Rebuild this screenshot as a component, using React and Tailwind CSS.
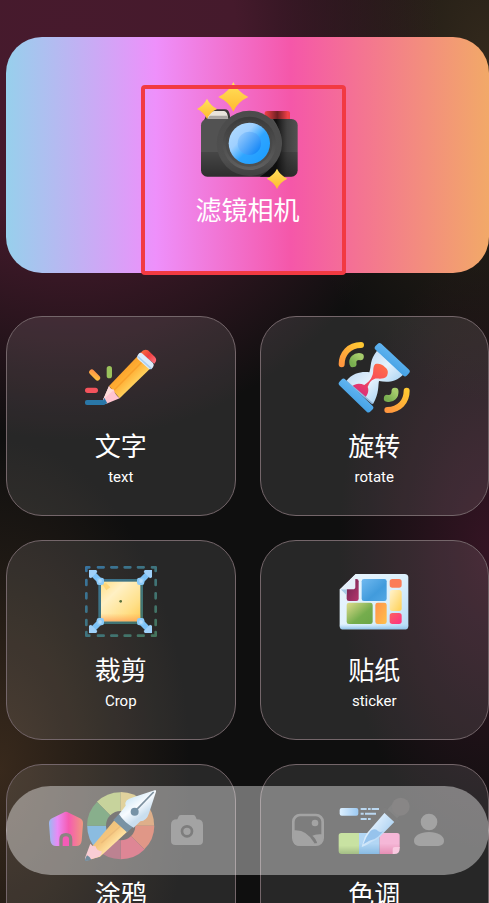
import { useState } from 'react';
import clsx from 'clsx';

const PencilIcon = () => (
  <svg viewBox="45 18 216 216" className="size-18" aria-hidden="true">
    <defs>
      <linearGradient id="pencil-body" x1="130" y1="90" x2="190" y2="150" gradientUnits="userSpaceOnUse">
        <stop offset="0" stopColor="#ffb65a" />
        <stop offset="0.35" stopColor="#fba22c" />
        <stop offset="0.6" stopColor="#ffae33" />
        <stop offset="1" stopColor="#ffd05c" />
      </linearGradient>
      <linearGradient id="pencil-eraser" x1="215" y1="50" x2="255" y2="85" gradientUnits="userSpaceOnUse">
        <stop offset="0" stopColor="#f8693c" />
        <stop offset="0.45" stopColor="#ef3f3f" />
        <stop offset="1" stopColor="#ff7280" />
      </linearGradient>
      <linearGradient id="pencil-spark" x1="0" y1="0" x2="1" y2="1">
        <stop offset="0" stopColor="#ff8a4a" />
        <stop offset="1" stopColor="#ffc93c" />
      </linearGradient>
      <linearGradient id="pencil-blue" x1="0" y1="0" x2="1" y2="0">
        <stop offset="0" stopColor="#2a77a8" />
        <stop offset="1" stopColor="#2a77a8" />
      </linearGradient>
    </defs>
    <rect x="45" y="195" width="62" height="15" rx="6" fill="url(#pencil-blue)" />
    <rect x="45" y="158" width="39" height="16" rx="8" fill="#f4535c" />
    <rect x="110" y="93" width="16" height="37" rx="8" fill="#9bc25c" />
    <rect x="54" y="112" width="40" height="16" rx="8" fill="url(#pencil-spark)" transform="rotate(45 74 120)" />
    <path d="M117 153 L201 65 L240 101 L149 190 Z" fill="url(#pencil-body)" />
    <path d="M132 166 L219 78" stroke="#f48f20" strokeWidth="4" opacity="0.5" />
    <path d="M117 153 Q121 164 132 164 Q133 176 149 190 L109 206 Q98 204 99 194 Z" fill="#ffc4cf" />
    <path d="M117 153 Q121 164 132 164 L99 194 Z" fill="#ffdcd9" />
    <path d="M103 188 Q99 196 96 204 Q103 210 112 205 Z" fill="#2a77a8" />
    <path d="M211 54 Q222 40 234 46 L255 66 Q263 76 253 86 Z" fill="url(#pencil-eraser)" />
    <path d="M205 58 Q210 51 216 55 L249 84 Q254 90 249 97 Q244 105 237 102 L204 73 Q198 67 205 58Z" fill="#dcebfa" />
    <path d="M205 66 L243 100" stroke="#a9cff0" strokeWidth="5" strokeLinecap="round" />
  </svg>
);

const HourglassIcon = () => (
  <svg viewBox="40 33 216 216" className="size-18" fill="none" aria-hidden="true">
    <defs>
      <linearGradient id="arc-orange" x1="0" y1="1" x2="1" y2="0">
        <stop offset="0" stopColor="#ff963f" />
        <stop offset="1" stopColor="#ffc832" />
      </linearGradient>
      <linearGradient id="arc-green" x1="0" y1="1" x2="1" y2="0">
        <stop offset="0" stopColor="#79ae50" />
        <stop offset="1" stopColor="#a6cc6c" />
      </linearGradient>
      <linearGradient id="glass-top" x1="150" y1="75" x2="218" y2="145" gradientUnits="userSpaceOnUse">
        <stop offset="0" stopColor="#cbe2f7" />
        <stop offset="0.5" stopColor="#e5f2fd" />
        <stop offset="1" stopColor="#b8dbf5" />
      </linearGradient>
      <linearGradient id="glass-bar" x1="0" y1="0" x2="1" y2="1">
        <stop offset="0" stopColor="#62b5f1" />
        <stop offset="1" stopColor="#44a1e4" />
      </linearGradient>
      <linearGradient id="sand" x1="185" y1="105" x2="115" y2="200" gradientUnits="userSpaceOnUse">
        <stop offset="0" stopColor="#ff7048" />
        <stop offset="0.5" stopColor="#f84d58" />
        <stop offset="1" stopColor="#d92d7a" />
      </linearGradient>
    </defs>
    <path d="M51 103 C51 72 73 45 109 45" stroke="url(#arc-orange)" strokeWidth="18" strokeLinecap="round" />
    <path d="M85 101 C82 88 92 78 107 80" stroke="url(#arc-green)" strokeWidth="21" strokeLinecap="round" />
    <path d="M188 240 C224 240 246 214 246 182" stroke="url(#arc-orange)" strokeWidth="18" strokeLinecap="round" />
    <path d="M188 205 C203 208 212 197 211 184" stroke="url(#arc-green)" strokeWidth="21" strokeLinecap="round" />
    <path d="M157 62 L238 132 C212 158 187 158 163 153 C160 165 164 191 145 222 L65 153 C86 126 116 124 134 127 C141 106 134 91 157 62Z" fill="url(#glass-top)" />
    <path d="M152 102 C163 99 174 103 181 112 C190 118 192 127 187 138 C176 151 157 143 149 147 C138 151 133 160 129 171 C135 184 126 197 123 202 L82 169 C92 160 106 159 119 165 C130 158 139 149 142 139 C149 126 142 112 152 102Z" fill="url(#sand)" />
    <path d="M65 154 L144 221" stroke="#8fb7dc" strokeWidth="5" />
    <rect x="138" y="76" width="129" height="25" rx="8" fill="url(#glass-bar)" transform="rotate(43 202 89)" />
    <rect x="30" y="184" width="129" height="25" rx="8" fill="url(#glass-bar)" transform="rotate(44 94 196)" />
  </svg>
);

const corners = [
  { x: 91, y: 79, angle: 0 },
  { x: 212, y: 79, angle: 90 },
  { x: 212, y: 200, angle: 180 },
  { x: 91, y: 200, angle: 270 },
];

const CropIcon = () => (
  <svg viewBox="45 30 216 216" className="size-18" fill="none" aria-hidden="true">
    <defs>
      <linearGradient id="crop-frame" x1="50" y1="35" x2="255" y2="240" gradientUnits="userSpaceOnUse">
        <stop offset="0" stopColor="#38739f" />
        <stop offset="1" stopColor="#45745c" />
      </linearGradient>
      <linearGradient id="crop-fill" x1="95" y1="80" x2="212" y2="200" gradientUnits="userSpaceOnUse">
        <stop offset="0" stopColor="#ffe08a" />
        <stop offset="0.3" stopColor="#fff0c4" />
        <stop offset="0.7" stopColor="#ffe08a" />
        <stop offset="1" stopColor="#ffcb52" />
      </linearGradient>
      <linearGradient id="crop-glow" x1="0" y1="175" x2="0" y2="199" gradientUnits="userSpaceOnUse">
        <stop offset="0" stopColor="#ffb05c" stopOpacity="0" />
        <stop offset="1" stopColor="#ff9f5c" stopOpacity="0.75" />
      </linearGradient>
    </defs>
    <path
      d="M49 48V37H58M246 37H257V48M257 231V242H246M58 242H49V231M84 37H101M124 37H141M164 37H181M204 37H221M84 242H101M124 242H141M164 242H181M204 242H221M49 75V90M49 115V130M49 155V170M49 195V210M257 75V90M257 115V130M257 155V170M257 195V210"
      stroke="url(#crop-frame)"
      strokeWidth="8"
      strokeLinecap="round"
      strokeLinejoin="round"
    />
    <rect x="89" y="76" width="126" height="127" fill="url(#crop-fill)" stroke="url(#crop-frame)" strokeWidth="8" />
    <rect x="93" y="175" width="118" height="24" fill="url(#crop-glow)" />
    <path d="M97 88L108 84L121 97L109 106Z" fill="#ffcf66" opacity="0.7" />
    <circle cx="152" cy="139" r="4" fill="#59703a" />
    {corners.map(({ x, y, angle }) => (
      <g key={angle} transform={`translate(${x} ${y}) rotate(${angle})`}>
        <path d="M-4 -4L-24 -24" stroke="#7cc2f7" strokeWidth="17" />
        <path d="M-34 -34H-12L-9 -28L-28 -9L-34 -12Z" fill="#9fd1fa" />
        <rect x="-11" y="-11" width="22" height="22" rx="7" fill="#8ccbf9" />
        <rect x="-6" y="-6" width="10" height="10" rx="3" fill="#b4dcfb" />
      </g>
    ))}
  </svg>
);

const StickerIcon = () => (
  <svg viewBox="40 15 216 216" className="size-18" aria-hidden="true">
    <defs>
      <linearGradient id="sheet" x1="60" y1="60" x2="250" y2="200" gradientUnits="userSpaceOnUse">
        <stop offset="0" stopColor="#e8f4fd" />
        <stop offset="0.6" stopColor="#dcf0fc" />
        <stop offset="1" stopColor="#b9ddf7" />
      </linearGradient>
      <linearGradient id="sheet-edge" x1="0" y1="192" x2="0" y2="208" gradientUnits="userSpaceOnUse">
        <stop offset="0" stopColor="#a7d3f4" stopOpacity="0" />
        <stop offset="1" stopColor="#8dc1e9" />
      </linearGradient>
      <linearGradient id="tile-wine" x1="0" y1="0" x2="1" y2="1">
        <stop offset="0" stopColor="#6d2450" />
        <stop offset="1" stopColor="#b5366d" />
      </linearGradient>
      <linearGradient id="tile-blue" x1="0" y1="0" x2="1" y2="1">
        <stop offset="0" stopColor="#70b9f0" />
        <stop offset="0.6" stopColor="#419bdc" />
        <stop offset="1" stopColor="#53a7e4" />
      </linearGradient>
      <linearGradient id="tile-green" x1="0" y1="0" x2="1" y2="1">
        <stop offset="0" stopColor="#dfdc8c" />
        <stop offset="0.6" stopColor="#75ad4d" />
        <stop offset="1" stopColor="#6ca648" />
      </linearGradient>
      <linearGradient id="tile-orange" x1="0" y1="0" x2="1" y2="1">
        <stop offset="0" stopColor="#ff924c" />
        <stop offset="1" stopColor="#ffc04a" />
      </linearGradient>
      <linearGradient id="tile-yellow" x1="0" y1="0" x2="1" y2="1">
        <stop offset="0" stopColor="#fff3cf" />
        <stop offset="1" stopColor="#ffd052" />
      </linearGradient>
      <linearGradient id="tile-pink" x1="0" y1="0" x2="1" y2="1">
        <stop offset="0" stopColor="#fa6260" />
        <stop offset="1" stopColor="#ff2f83" />
      </linearGradient>
    </defs>
    <path d="M92 42H240Q251 42 251 53V197Q251 208 240 208H56Q45 208 45 197V88Z" fill="url(#sheet)" />
    <path d="M45 190H251V197Q251 208 240 208H56Q45 208 45 197Z" fill="url(#sheet-edge)" />
    <rect x="66" y="57" width="36" height="66" rx="7" fill="url(#tile-wine)" />
    <rect x="111" y="57" width="75" height="66" rx="7" fill="url(#tile-blue)" />
    <rect x="66" y="128" width="78" height="64" rx="7" fill="url(#tile-green)" />
    <rect x="152" y="128" width="34" height="64" rx="7" fill="url(#tile-orange)" />
    <rect x="195" y="57" width="36" height="26" rx="8" fill="#fb7d58" />
    <rect x="195" y="90" width="36" height="63" rx="8" fill="url(#tile-yellow)" />
    <rect x="195" y="159" width="36" height="33" rx="8" fill="url(#tile-pink)" />
    <path d="M48 88L66 106V88Z" fill="#a5cbe6" />
    <path d="M92 42V80Q92 88 84 88H45Z" fill="#e6effa" />
    <path d="M92 42L45 88L40 84L88 38Z" fill="#2a2829" />
  </svg>
);

const wheel = ['#a2b65a', '#cdb45c', '#c97a3c', '#cc5238', '#c8364f', '#8f3049', '#3f8fcb', '#3a7a40'];

const DoodleIcon = () => (
  <svg viewBox="255 87 216 216" className="size-18" aria-hidden="true">
    <defs>
      <linearGradient id="nib" x1="385" y1="115" x2="425" y2="170" gradientUnits="userSpaceOnUse">
        <stop offset="0" stopColor="#b6dcf2" />
        <stop offset="0.5" stopColor="#f3f9ff" />
        <stop offset="1" stopColor="#a5c8e4" />
      </linearGradient>
      <linearGradient id="doodle-pencil" x1="305" y1="200" x2="350" y2="245" gradientUnits="userSpaceOnUse">
        <stop offset="0" stopColor="#dd9a2a" />
        <stop offset="0.5" stopColor="#ee9e26" />
        <stop offset="1" stopColor="#ffcf63" />
      </linearGradient>
    </defs>
    {/* Rueda de color, una porción cada 45 grados */}
    {wheel.map((color, i) => (
      <path
        key={color}
        d="M362 197L362 96A101 101 0 0 1 433 126Z"
        fill={color}
        transform={`rotate(${(i + 7) * 45} 362 197)`}
      />
    ))}
    <circle cx="362" cy="197" r="44" fill="#24201f" />
    <path d="M272 265L346 178L384 213L300 290L255 303Z" fill="url(#doodle-pencil)" />
    <path d="M304 249L366 194" stroke="#ce7c16" strokeWidth="4" opacity="0.5" />
    <path d="M271 251Q277 260 287 259Q289 273 305 274Q306 285 297 290L256 303L255 294Z" fill="#f5acb7" />
    <path d="M261 286Q254 297 255 303Q265 303 274 299Q270 290 261 286Z" fill="#15425e" />
    <path d="M357 162L340 180L381 217L400 200Z" fill="#204b68" />
    <path d="M357 163L377 137Q371 119 400 112L466 90Q469 92 468 95L447 160Q440 183 421 184L401 203Q375 190 357 163Z" fill="url(#nib)" />
    <path d="M404 155L461 96" stroke="#26465f" strokeWidth="5" />
    <circle cx="404" cy="155" r="12" fill="#1c4a6b" />
  </svg>
);

const PaletteIcon = () => (
  <svg viewBox="280 87 216 216" className="size-18" aria-hidden="true">
    <defs>
      <linearGradient id="swatch-label" x1="0" y1="0" x2="1" y2="0">
        <stop offset="0" stopColor="#c5e5ff" />
        <stop offset="1" stopColor="#5ba5ea" />
      </linearGradient>
      <linearGradient id="swatch-green" x1="0" y1="0" x2="0" y2="1">
        <stop offset="0.6" stopColor="#a4cf65" />
        <stop offset="1" stopColor="#679236" />
      </linearGradient>
      <linearGradient id="swatch-blue" x1="0" y1="0" x2="0" y2="1">
        <stop offset="0.5" stopColor="#7fbbed" />
        <stop offset="1" stopColor="#3b8ed0" />
      </linearGradient>
      <linearGradient id="swatch-pink" x1="0" y1="0" x2="0" y2="1">
        <stop offset="0.5" stopColor="#ee87bc" />
        <stop offset="1" stopColor="#d44583" />
      </linearGradient>
      <linearGradient id="dropper" x1="375" y1="180" x2="425" y2="215" gradientUnits="userSpaceOnUse">
        <stop offset="0" stopColor="#dceeff" />
        <stop offset="1" stopColor="#86beed" />
      </linearGradient>
    </defs>
    <rect x="285" y="144" width="56" height="23" rx="6" fill="url(#swatch-label)" />
    <path d="M348 147H366M370 147H378M381 147H403M348 161H357M361 161H394M348 177H366M370 177H378" stroke="#8dbce7" strokeWidth="6" />
    <path d="M343 219V282H291Q282 282 282 273V227Q282 219 290 219Z" fill="url(#swatch-green)" />
    <path d="M343 219H405V282H343Z" fill="url(#swatch-blue)" />
    <path d="M405 219H457Q465 219 465 227V262L445 282H405Z" fill="url(#swatch-pink)" />
    <path d="M465 261H450Q444 261 444 267V282H449Q465 282 465 266Z" fill="#f5a5cc" />
    <path d="M351 260L360 232Q366 219 377 208L422 156L451 184L404 232Q395 242 379 247Q362 258 354 260Z" fill="url(#dropper)" />
    <path d="M378 212Q393 203 400 213Q407 219 416 214L400 230Q389 240 374 242L356 253Q365 228 378 212Z" fill="#519be0" />
    <path d="M426 151L443 132L472 159L455 177Z" fill="#343434" />
    <path d="M421 151L456 183" stroke="#292929" strokeWidth="14" strokeLinecap="round" />
    <circle cx="468" cy="140" r="27" fill="#393636" />
  </svg>
);

const FilterCameraIcon = () => (
  <svg viewBox="190 33 330 330" className="size-[110px]" aria-hidden="true">
    <defs>
      <linearGradient id="cam-body" x1="0" y1="147" x2="0" y2="320" gradientUnits="userSpaceOnUse">
        <stop offset="0" stopColor="#525252" />
        <stop offset="0.57" stopColor="#525252" />
        <stop offset="0.58" stopColor="#464646" />
        <stop offset="1" stopColor="#2e2e2e" />
      </linearGradient>
      <linearGradient id="cam-shade" x1="440" y1="0" x2="505" y2="0" gradientUnits="userSpaceOnUse">
        <stop offset="0" stopColor="#0c0c0c" stopOpacity="0.95" />
        <stop offset="0.5" stopColor="#1a1a1a" stopOpacity="0.3" />
        <stop offset="1" stopColor="#1a1a1a" stopOpacity="0" />
      </linearGradient>
      <linearGradient id="cam-ring" x1="0" y1="120" x2="0" y2="318" gradientUnits="userSpaceOnUse">
        <stop offset="0" stopColor="#4b4b4b" />
        <stop offset="0.75" stopColor="#4f4f4f" />
        <stop offset="1" stopColor="#404040" />
      </linearGradient>
      <linearGradient id="cam-inner" x1="0" y1="140" x2="0" y2="300" gradientUnits="userSpaceOnUse">
        <stop offset="0" stopColor="#3a3a3a" />
        <stop offset="1" stopColor="#606060" />
      </linearGradient>
      <linearGradient id="lens-outer" x1="305" y1="170" x2="400" y2="260" gradientUnits="userSpaceOnUse">
        <stop offset="0" stopColor="#b0dbff" />
        <stop offset="0.35" stopColor="#9fd0ff" />
        <stop offset="0.65" stopColor="#2fa5ff" />
        <stop offset="1" stopColor="#219fff" />
      </linearGradient>
      <linearGradient id="lens-inner" x1="330" y1="200" x2="385" y2="245" gradientUnits="userSpaceOnUse">
        <stop offset="0" stopColor="#8cc5fd" />
        <stop offset="1" stopColor="#1688f7" />
      </linearGradient>
      <linearGradient id="cam-flash" x1="405" y1="0" x2="481" y2="0" gradientUnits="userSpaceOnUse">
        <stop offset="0" stopColor="#f14147" />
        <stop offset="0.5" stopColor="#6f1f22" />
        <stop offset="0.9" stopColor="#ef3f47" />
      </linearGradient>
      <linearGradient id="star" x1="0" y1="0" x2="0" y2="1">
        <stop offset="0" stopColor="#ffe25c" />
        <stop offset="1" stopColor="#ffb92e" />
      </linearGradient>
    </defs>
    <path d="M222 153L238 118H284Q297 117 300 132L303 153Z" fill="#3c3838" />
    <path d="M233 146Q236 124 254 123H282Q291 123 294 137L296 146Z" fill="#e9e4dd" />
    <path d="M240 137H293L296 146H234Z" fill="#aaa6a3" />
    <path d="M405 148V130Q405 123 413 123H473Q481 123 481 130V148Z" fill="url(#cam-flash)" />
    <rect x="214" y="147" width="290" height="173" rx="19" fill="url(#cam-body)" />
    <path d="M430 147H485Q504 147 504 166V301Q504 320 485 320H390Q440 295 457 220Q452 175 430 147Z" fill="url(#cam-shade)" />
    <circle cx="359" cy="220" r="98" fill="url(#cam-ring)" />
    <circle cx="359" cy="220" r="80" fill="url(#cam-inner)" />
    <circle cx="358" cy="220" r="70" fill="#454545" opacity="0.55" />
    <circle cx="359" cy="220" r="62" fill="url(#lens-outer)" />
    <circle cx="359" cy="220" r="35" fill="url(#lens-inner)" />
    <path d="M311 36Q322 64 356 81Q323 96 311 125Q299 96 266 81Q300 64 311 36Z" fill="url(#star)" />
    <path d="M232 86Q241 105 262 117Q241 127 232 147Q223 127 202 117Q223 105 232 86Z" fill="url(#star)" />
    <path d="M442 296Q451 315 473 326Q451 336 442 357Q433 336 411 326Q433 315 442 296Z" fill="url(#star)" />
  </svg>
);

const HomeIcon = () => (
  <svg viewBox="144 150 108 108" className="size-9" aria-hidden="true">
    <defs>
      <linearGradient id="home" x1="147" y1="0" x2="249" y2="0" gradientUnits="userSpaceOnUse">
        <stop offset="0" stopColor="#9bb9f0" />
        <stop offset="0.25" stopColor="#e98af5" />
        <stop offset="0.58" stopColor="#f65bb0" />
        <stop offset="1" stopColor="#ef9880" />
      </linearGradient>
    </defs>
    <path
      d="M190 155Q198 150 206 155L240 172Q250 177 249 189L245 239Q243 255 229 255H217V235Q217 216 198 216Q178 216 178 235V255H168Q154 255 151 239L147 189Q146 177 156 172Z"
      fill="url(#home)"
    />
    <path d="M188 255V236Q188 226 198 226Q207 226 207 236V255Z" fill="#f65bb8" />
  </svg>
);

const CameraIcon = () => (
  <svg viewBox="507 150 108 108" className="size-9" aria-hidden="true">
    <path
      fillRule="evenodd"
      fill="currentColor"
      d="M543 162H580Q584 162 586 166L590 175Q609 175 609 191V239Q609 252 596 252H526Q513 252 513 239V191Q513 175 532 175L536 166Q538 162 543 162ZM561 192A19 19 0 1 0 561 230A19 19 0 1 0 561 192ZM561 200A11 11 0 1 1 561 222A11 11 0 1 1 561 200Z"
    />
  </svg>
);

const GalleryIcon = () => (
  <svg viewBox="135 150 108 108" className="size-9" aria-hidden="true">
    <rect x="145" y="162" width="88" height="89" rx="20" fill="none" stroke="currentColor" strokeWidth="8" />
    <circle cx="210" cy="186" r="10" fill="currentColor" />
    <path d="M145 208Q185 204 208 246L202 254H160Q145 254 145 238Z" fill="currentColor" />
    <path d="M202 224Q211 218 233 220V236Q232 246 217 249Q214 234 202 224Z" fill="currentColor" />
  </svg>
);

const UserIcon = () => (
  <svg viewBox="498 150 108 108" className="size-9" fill="currentColor" aria-hidden="true">
    <circle cx="552" cy="183" r="25" />
    <path d="M552 213C578 213 597 224 597 239C597 250 589 255 575 255H529C515 255 507 250 507 239C507 224 526 213 552 213Z" />
  </svg>
);

const tools = [
  { title: '文字', subtitle: 'text', icon: PencilIcon },
  { title: '旋转', subtitle: 'rotate', icon: HourglassIcon },
  { title: '裁剪', subtitle: 'Crop', icon: CropIcon },
  { title: '贴纸', subtitle: 'sticker', icon: StickerIcon },
  { title: '涂鸦', icon: DoodleIcon },
  { title: '色调', icon: PaletteIcon },
];

const tabs = [
  { id: 'home', label: '首页', icon: HomeIcon },
  { id: 'camera', label: '相机', icon: CameraIcon },
  { id: 'gallery', label: '相册', icon: GalleryIcon },
  { id: 'user', label: '我的', icon: UserIcon },
];

const ToolCard = ({ title, subtitle, icon: Icon }) => (
  <button
    type="button"
    className="flex h-[200px] flex-col items-center rounded-[36px] border border-[#74666a] bg-white/10 pt-6 text-white"
  >
    <Icon />
    <span className="mt-4 text-[26px] leading-9">{title}</span>
    {subtitle && <span className="text-[15px] leading-6">{subtitle}</span>}
  </button>
);

const App = () => {
  const [tab, setTab] = useState('home');

  return (
    <div className="relative h-screen overflow-hidden bg-[#0f0f0f] bg-[radial-gradient(ellipse_370px_400px_at_70px_40px,#471a2d_0%,#451a2c_45%,transparent_100%),radial-gradient(ellipse_210px_340px_at_100%_60px,#33291c_0%,transparent_100%),radial-gradient(ellipse_150px_300px_at_100%_550px,#341423_0%,transparent_100%),radial-gradient(ellipse_190px_330px_at_0px_770px,#38291c_0%,transparent_100%)] font-[Roboto,'Noto_Sans_CJK_SC',sans-serif]">
      <main className="h-full overflow-y-auto pt-[37px] pb-32 pl-1.5 [scrollbar-width:none]">
        <section className="relative">
          <button
            type="button"
            className="flex h-[236px] w-full flex-col items-center rounded-[36px] bg-[linear-gradient(90deg,#97d0ec_0%,#ee90fb_31%,#f557a9_59%,#f2a968_100%)] pt-11 text-white"
          >
            <FilterCameraIcon />
            <span className="text-[26px] leading-10">滤镜相机</span>
          </button>
          <div className="pointer-events-none absolute top-12 left-[28%] h-[190px] w-[205px] rounded-sm border-4 border-[#f23a42]" />
        </section>

        {/* Herramientas */}
        <section className="mt-[43px] grid grid-cols-2 gap-6">
          {tools.map((tool) => (
            <ToolCard key={tool.title} {...tool} />
          ))}
        </section>
      </main>

      {/* Barra inferior */}
      <nav className="absolute right-0 bottom-7 left-1.5 grid h-[89px] grid-cols-4 items-center rounded-full bg-white/40 pb-1">
        {tabs.map(({ id, label, icon: Icon }) => (
          <button
            key={id}
            type="button"
            aria-label={label}
            aria-pressed={tab === id}
            onClick={() => setTab(id)}
            className={clsx('flex justify-center', tab === id ? 'text-white' : 'text-[#a3a3a3]')}
          >
            <Icon />
          </button>
        ))}
      </nav>
    </div>
  );
};

export default App;
